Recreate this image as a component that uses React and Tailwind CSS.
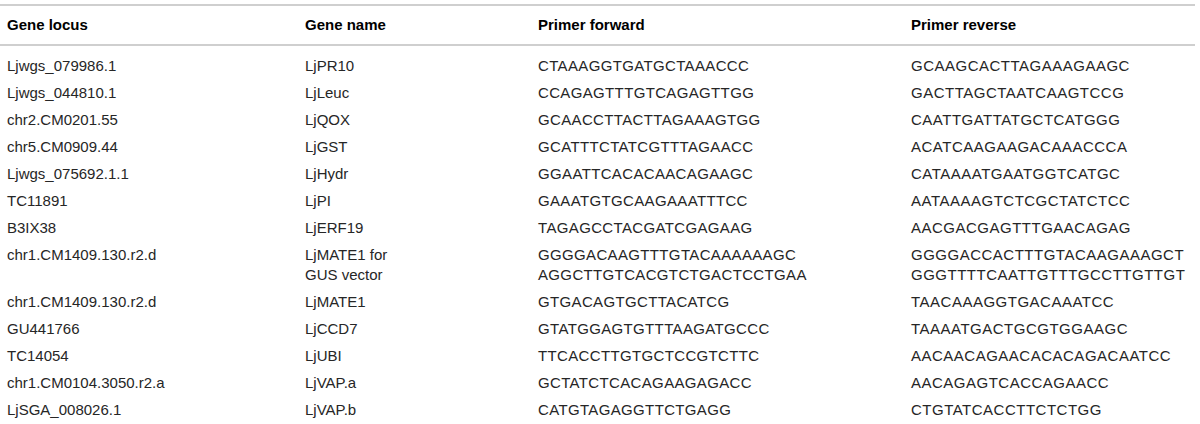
import React from 'react';

const rows = [
  ['Ljwgs_079986.1', ['LjPR10'], ['CTAAAGGTGATGCTAAACCC'], ['GCAAGCACTTAGAAAGAAGC']],
  ['Ljwgs_044810.1', ['LjLeuc'], ['CCAGAGTTTGTCAGAGTTGG'], ['GACTTAGCTAATCAAGTCCG']],
  ['chr2.CM0201.55', ['LjQOX'], ['GCAACCTTACTTAGAAAGTGG'], ['CAATTGATTATGCTCATGGG']],
  ['chr5.CM0909.44', ['LjGST'], ['GCATTTCTATCGTTTAGAACC'], ['ACATCAAGAAGACAAACCCA']],
  ['Ljwgs_075692.1.1', ['LjHydr'], ['GGAATTCACACAACAGAAGC'], ['CATAAAATGAATGGTCATGC']],
  ['TC11891', ['LjPI'], ['GAAATGTGCAAGAAATTTCC'], ['AATAAAAGTCTCGCTATCTCC']],
  ['B3IX38', ['LjERF19'], ['TAGAGCCTACGATCGAGAAG'], ['AACGACGAGTTTGAACAGAG']],
  ['chr1.CM1409.130.r2.d', ['LjMATE1 for', 'GUS vector'], ['GGGGACAAGTTTGTACAAAAAAGC', 'AGGCTTGTCACGTCTGACTCCTGAA'], ['GGGGACCACTTTGTACAAGAAAGCT', 'GGGTTTTCAATTGTTTGCCTTGTTGT']],
  ['chr1.CM1409.130.r2.d', ['LjMATE1'], ['GTGACAGTGCTTACATCG'], ['TAACAAAGGTGACAAATCC']],
  ['GU441766', ['LjCCD7'], ['GTATGGAGTGTTTAAGATGCCC'], ['TAAAATGACTGCGTGGAAGC']],
  ['TC14054', ['LjUBI'], ['TTCACCTTGTGCTCCGTCTTC'], ['AACAACAGAACACACAGACAATCC']],
  ['chr1.CM0104.3050.r2.a', ['LjVAP.a'], ['GCTATCTCACAGAAGAGACC'], ['AACAGAGTCACCAGAACC']],
  ['LjSGA_008026.1', ['LjVAP.b'], ['CATGTAGAGGTTCTGAGG'], ['CTGTATCACCTTCTCTGG']],
];

const Lines = ({ items }) => items.map((t, i) => <div key={i}>{t}</div>);

export default function App() {
  return (
    <div className="w-[1200px] h-[424px] overflow-hidden bg-white pt-[4px] font-['Liberation_Sans',Arial,sans-serif]">
      <table className="w-[1195px] border-collapse table-fixed text-[15px] leading-[20px]">
        <colgroup>
          <col className="w-[298px]" />
          <col className="w-[233px]" />
          <col className="w-[373px]" />
          <col className="w-[291px]" />
        </colgroup>
        <thead>
          <tr className="border-t-2 border-b-2 border-[#cfcfcf] text-left text-black">
            <th className="pl-[7px] h-[40px] font-bold">Gene locus</th>
            <th className="pl-[7px] font-bold">Gene name</th>
            <th className="pl-[7px] font-bold">Primer forward</th>
            <th className="pl-[7px] font-bold">Primer reverse</th>
          </tr>
        </thead>
        <tbody className="text-[#262626]">
          <tr><td colSpan={4} className="h-[7px] p-0"></td></tr>
          {rows.map((r, i) => (
            <tr key={i} className="align-top">
              <td className="pl-[7px] py-[3.5px]">{r[0]}</td>
              <td className="pl-[7px] py-[3.5px]"><Lines items={r[1]} /></td>
              <td className="pl-[7px] py-[3.5px] tracking-[0.35px]"><Lines items={r[2]} /></td>
              <td className="pl-[7px] py-[3.5px] tracking-[0.5px]"><Lines items={r[3]} /></td>
            </tr>
          ))}
        </tbody>
      </table>
    </div>
  );
}
